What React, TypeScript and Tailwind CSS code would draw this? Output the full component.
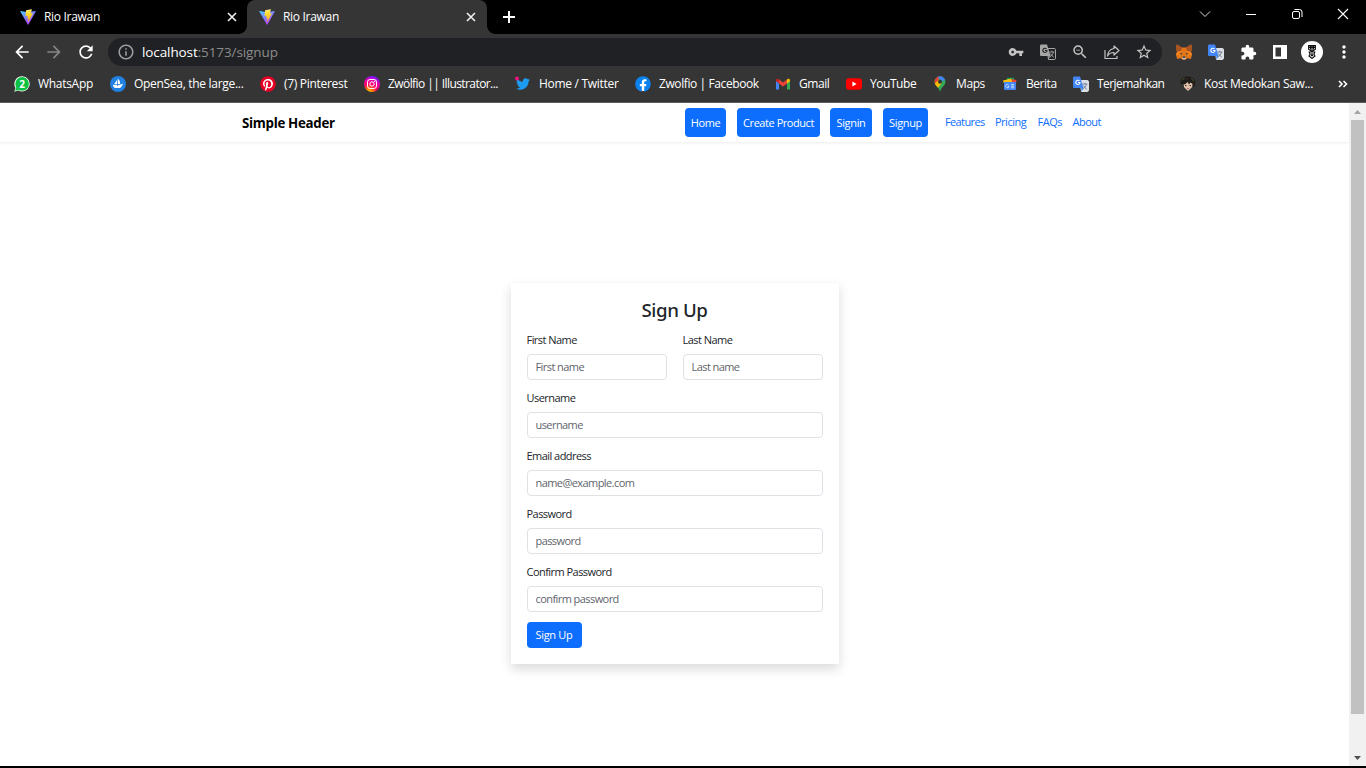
import React from "react";
import { MdArrowBack, MdArrowForward, MdRefresh, MdInfoOutline, MdVpnKey, MdZoomOut, MdStarBorder, MdExtension, MdMoreVert } from "react-icons/md";
import { FaPinterest, FaTwitter, FaFacebook } from "react-icons/fa";

function ViteLogo() {
  return (
    <svg width="16" height="16" viewBox="0 0 32 32" className="shrink-0">
      <defs>
        <linearGradient id="va" x1="0" y1="0" x2="0.6" y2="1">
          <stop offset="0" stopColor="#41d1ff" />
          <stop offset="1" stopColor="#bd34fe" />
        </linearGradient>
        <linearGradient id="vb" x1="0.4" y1="0" x2="0.5" y2="1">
          <stop offset="0" stopColor="#ffea83" />
          <stop offset="0.3" stopColor="#ffdd35" />
          <stop offset="1" stopColor="#ffa800" />
        </linearGradient>
      </defs>
      <path d="M31.5 5.2 17 31c-.3.6-1.2.6-1.5 0L.6 5.200c-.4-.7.2-1.500 1-1.300L16 6.400l14.500-2.500c.8-.2 1.400.6 1 1.300Z" fill="url(#va)" />
      <path d="m23 .5-10.600 2.100a.5.500 0 0 0-.4.400l-.7 11c0 .3.200.5.500.4l3-.7c.3 0 .5.200.5.500l-.9 4.300c0 .3.200.5.500.4l1.800-.5c.3-.1.600.1.500.4l-1.400 6.800c-.1.400.5.700.7.300L25.800 9c.2-.300-.1-.7-.4-.600l-3.100.6a.4.400 0 0 1-.5-.5L23.800 1c.1-.3-.4-.6-.8-.5Z" fill="url(#vb)" />
    </svg>
  );
}

function CloseMark() {
  return (
    <svg width="10" height="10" viewBox="0 0 10 10" className="shrink-0" stroke="#f1f1f1" strokeWidth="1.6">
      <path d="M1 1l8 8M9 1l-8 8" />
    </svg>
  );
}

function WhatsAppIcon() {
  return (
    <svg width="16" height="16" viewBox="0 0 16 16">
      <path d="M8.200.3a7.600 7.600 0 1 1-3.700 14.300L.3 15.700l1.100-4A7.600 7.600 0 0 1 8.200.3Z" fill="#fff" />
      <circle cx="8.100" cy="7.900" r="6.800" fill="#0bc143" />
      <path d="m1.200 14.800.9-3.800 2.800 3Z" fill="#0bc143" />
      <text x="8" y="11.500" textAnchor="middle" fontSize="10" fontWeight="700" fill="#fff" fontFamily="Open Sans, sans-serif">2</text>
    </svg>
  );
}

function OpenSeaIcon() {
  return (
    <svg width="16" height="16" viewBox="0 0 16 16">
      <circle cx="8" cy="8" r="8" fill="#2081e2" />
      <path d="M7.700 2.800c1.800 1.200 2.800 3 2.300 5.200H7.700ZM7 4v4H4.300ZM3 8.800h3.900v1h1.300v-1h1.600l3-1v1c-.9.500-1 1.200-1.500 2-.5.900-1 1.200-2 1.200H5.600C4 12 3 10.700 3 8.800Z" fill="#fff" />
    </svg>
  );
}

function InstagramIcon() {
  return (
    <svg width="16" height="16" viewBox="0 0 16 16" fill="none">
      <defs>
        <radialGradient id="ig" cx="0.3" cy="1.05" r="1.050">
          <stop offset="0" stopColor="#ffd600" />
          <stop offset="0.25" stopColor="#ff7a00" />
          <stop offset="0.5" stopColor="#ff0069" />
          <stop offset="0.78" stopColor="#e600a8" />
          <stop offset="1" stopColor="#7a14ff" />
        </radialGradient>
      </defs>
      <circle cx="8" cy="8" r="8" fill="url(#ig)" />
      <rect x="3.500" y="3.500" width="9" height="9" rx="2.600" stroke="#fff" strokeWidth="1" />
      <circle cx="8" cy="8" r="2.200" stroke="#fff" strokeWidth="1" />
      <circle cx="10.600" cy="5.400" r=".6" fill="#fff" />
    </svg>
  );
}

function TwitterIcon() {
  return (
    <svg width="16" height="16" viewBox="0 0 16 16">
      <svg x="1" y="1" width="14" height="14"><FaTwitter size={14} color="#1d9bf0" /></svg>
      <circle cx="2" cy="2.600" r="2" fill="#f4127f" />
    </svg>
  );
}

function FacebookIcon() {
  return (
    <svg width="16" height="16" viewBox="0 0 16 16">
      <circle cx="8" cy="8" r="7" fill="#fff" />
      <FaFacebook size={16} color="#0c82ee" />
    </svg>
  );
}

function PinterestIcon() {
  return (
    <svg width="16" height="16" viewBox="0 0 16 16">
      <circle cx="8" cy="8" r="7" fill="#fff" />
      <FaPinterest size={16} color="#e60023" />
    </svg>
  );
}

function GmailIcon() {
  return (
    <svg width="16" height="16" viewBox="0 0 16 16">
      <path d="M1 4v9.500h3V7Z" fill="#4285f4" />
      <path d="M12 7v6.500h3V4Z" fill="#34a853" />
      <path d="M4 3.500 8 6.500l4-3V7.500L8 10.500l-4-3Z" fill="#ea4335" />
      <path d="M1 4.300C1 2.700 2.700 2.200 4 3.300V7.500L1 5.300Z" fill="#c5221f" />
      <path d="M15 4.300C15 2.700 13.300 2.200 12 3.300V7.500l3-2.200Z" fill="#fbbc04" />
    </svg>
  );
}

function YouTubeIcon() {
  return (
    <svg width="16" height="16" viewBox="0 0 16 16">
      <rect x="0" y="2.300" width="16" height="11.400" rx="3" fill="#f00" />
      <path d="M6.400 5.600v4.800L10.600 8Z" fill="#fff" />
    </svg>
  );
}

function MapsIcon() {
  return (
    <svg width="16" height="16" viewBox="0 0 16 16">
      <defs>
        <clipPath id="pin"><path d="M8 .3a5.500 5.500 0 0 1 5.500 5.500C13.500 9.500 9.500 10.500 8 15.700 6.500 10.500 2.500 9.500 2.500 5.800A5.500 5.500 0 0 1 8 .3Z" /></clipPath>
      </defs>
      <g clipPath="url(#pin)">
        <rect width="16" height="16" fill="#34a853" />
        <path d="M0 0h8L6 5 2 9Z" fill="#ea4335" />
        <path d="M5 0h11v4L9 5Z" fill="#4285f4" />
        <path d="M2 8.500 6.500 4l3 3.500L5 13Z" fill="#fbbc04" />
      </g>
      <circle cx="8" cy="5.800" r="2" fill="#353535" />
    </svg>
  );
}

function NewsIcon() {
  return (
    <svg width="16" height="16" viewBox="0 0 16 16">
      <path d="M5 1.800h7v6H5Z" fill="#0f9d58" />
      <path d="m9 3 5.500 1-1 6H8Z" fill="#ea4335" />
      <path d="M1 4.500 9 2.500l2 6-8 2Z" fill="#ffc107" />
      <rect x="2" y="6" width="12" height="8" rx="1" fill="#4285f4" />
      <path d="M6.700 9.100A1.700 1.700 0 1 0 7 10.400H5.700M9 8.600h3.200M9 10.200h3.200M9 11.800h3.200" stroke="#e3edfd" strokeWidth=".8" fill="none" />
    </svg>
  );
}

function TranslateIcon({ mono = false }: { mono?: boolean }) {
  const back = mono ? "#202124" : "#dce0e6";
  const front = mono ? "#a6a6a6" : "#4285f4";
  const glyph = mono ? "#a6a6a6" : "#68778e";
  return (
    <svg width="16" height="16" viewBox="0 0 16 16" fill="none">
      <path d="M7 4.500h7.300c.7 0 1.200.5 1.200 1.200v8.600c0 .7-.5 1.200-1.200 1.200H8.500Z" fill={back} stroke={mono ? front : back} />
      <path d="M1.300.5H7l3.500 11.500H1.300c-.7 0-1.300-.6-1.300-1.300V1.800C0 1.100.6.500 1.300.5Z" fill={front} />
      <path d="m8.300 12.200 2.200.1-2 3Z" fill={mono ? front : "#1a73e8"} />
      <path d="M9.400 8h5M12 6.800V8M13.500 8c-.5 2.300-1.800 3.800-3.500 4.700M10.500 9.500c.7 1.500 1.800 2.800 3.300 3.700" stroke={glyph} strokeWidth=".9" />
      <path d="M6.500 5A2.100 2.100 0 1 0 7 6.500H5" stroke={mono ? "#202124" : "#fff"} strokeWidth="1.100" />
    </svg>
  );
}

function PortraitIcon() {
  return (
    <svg width="16" height="16" viewBox="0 0 16 16">
      <path d="M3 6 8 3.500l5 2.500-.8 5L8 15 3.800 11Z" fill="#e3c3ad" />
      <path d="M.5 7C0 3 3.500.5 7 .5c5 0 8.500 2.500 8.300 6.500-.1 2-.8 3.500-2.300 4.100L12.500 8 10.500 6.500 9 8.500 7.500 6 5 8.500 3.500 8v3.500C1.500 10.500.7 8.700.5 7Z" fill="#1f1d19" />
      <path d="M2 4.500 4.500 2M11.500 2.500l2.300 2.800M1.500 8.500l1 1.500" stroke="#4b6a34" strokeWidth=".9" />
      <path d="M6 2.500 7.500 4M12.500 6.500l1 2" stroke="#6b2d25" strokeWidth=".8" />
      <path d="M5 9.600h1.500M9.500 9.600H11" stroke="#302722" />
      <path d="M7 12.700h2" stroke="#a3665c" />
    </svg>
  );
}

function FoxIcon() {
  return (
    <svg width="16" height="16" viewBox="0 0 16 16">
      <path d="M.8.500 6 3.500h4L15.200.5 16 4l-1 4 1 3-1.200 4-3.300-.8L9.500 15.600h-3l-2-1.400-3.300.8L0 11l1-3L0 4Z" fill="#e2761b" />
      <path d="M.8.500 6 3.500 5 7 1 8 0 4ZM15.200.5 10 3.500 11 7l4 1 1-4Z" fill="#a85420" />
      <path d="M1 8 5 7l-.5 3.500L0 11ZM15 8l-4-1 .5 3.500L16 11Z" fill="#f6851b" />
      <path d="m3.600 9 2.600.3-.6 1.500ZM12.400 9l-2.600.3.600 1.500Z" fill="#243447" />
      <path d="M6.400 13h3.200l.4 1.600-1 .8H7l-1-.8Z" fill="#d5bfb2" />
      <path d="M6.500 12.500h3v1.300h-3Z" fill="#233447" />
    </svg>
  );
}

const bookmarks = [
  { icon: <WhatsAppIcon />, label: "WhatsApp", box: "w-[96px]", track: "tracking-[-0.3px]" },
  { icon: <OpenSeaIcon />, label: "OpenSea, the large...", box: "w-[150px]", track: "tracking-[-0.3px]" },
  { icon: <PinterestIcon />, label: "(7) Pinterest", box: "w-[104px]", track: "tracking-[-0.3px]" },
  { icon: <InstagramIcon />, label: "Zwölfio || Illustrator...", box: "w-[151px]", track: "tracking-[-0.58px]" },
  { icon: <TwitterIcon />, label: "Home / Twitter", box: "w-[120px]", track: "tracking-[-0.3px]" },
  { icon: <FacebookIcon />, label: "Zwolfio | Facebook", box: "w-[140px]", track: "tracking-[-0.4px]" },
  { icon: <GmailIcon />, label: "Gmail", box: "w-[71px]", track: "tracking-[-0.45px]" },
  { icon: <YouTubeIcon />, label: "YouTube", box: "w-[86px]", track: "tracking-[-0.45px]" },
  { icon: <MapsIcon />, label: "Maps", box: "w-[70px]", track: "tracking-[-0.4px]" },
  { icon: <NewsIcon />, label: "Berita", box: "w-[71px]", track: "tracking-[-0.45px]" },
  { icon: <TranslateIcon />, label: "Terjemahkan", box: "w-[107px]", track: "tracking-[-0.56px]" },
  { icon: <PortraitIcon />, label: "Kost Medokan Saw...", box: "w-[157px]", track: "tracking-[-0.33px]" },
];

function TabStrip() {
  return (
    <div className="flex h-[34px] items-center bg-black text-white">
      <div className="flex h-full w-[247px] items-center pl-5 pr-[10px]">
        <ViteLogo />
        <span className="ml-2 flex-1 tracking-[-0.3px]">Rio Irawan</span>
        <CloseMark />
      </div>
      <div className="relative flex h-full w-[240px] items-center rounded-t-lg bg-[#353535] pl-3 pr-[11px]">
        <span className="absolute -left-2 bottom-0 h-2 w-2 bg-[radial-gradient(circle_at_0_0,#000_7.500px,#353535_8px)]" />
        <span className="absolute -right-2 bottom-0 h-2 w-2 bg-[radial-gradient(circle_at_100%_0,#000_7.500px,#353535_8px)]" />
        <ViteLogo />
        <span className="ml-2 flex-1 tracking-[-0.3px]">Rio Irawan</span>
        <CloseMark />
      </div>
      <svg width="12" height="12" viewBox="0 0 12 12" className="ml-4" stroke="#fff" strokeWidth="2"><path d="M6 0v12M0 6h12" /></svg>
      <div className="ml-auto mr-[17px] mb-[6px] flex items-center gap-[34px]">
        <svg width="12" height="12" viewBox="0 0 12 12" fill="none" stroke="#ddd" strokeWidth="1"><path d="m1 3.500 5 5 5-5" /></svg>
        <svg width="12" height="12" viewBox="0 0 12 12" stroke="#fff"><path d="M1 6.500h10" /></svg>
        <svg width="12" height="12" viewBox="0 0 12 12" fill="none" stroke="#fff" strokeWidth="1"><rect x="1.500" y="3.500" width="7" height="7" rx="1.500" /><path d="M3.500 1.500h5a2.500 2.500 0 0 1 2.500 2.500v5" /></svg>
        <svg width="12" height="12" viewBox="0 0 12 12" stroke="#fff" strokeWidth="1.100"><path d="m1 1 10 10M11 1 1 11" /></svg>
      </div>
    </div>
  );
}

function Toolbar() {
  return (
    <div className="flex h-9 items-center bg-[#353535] pl-[12px] text-white">
      <MdArrowBack size={20} className="shrink-0" />
      <MdArrowForward size={20} color="#858585" className="ml-3 shrink-0" />
      <MdRefresh size={20} className="ml-3 shrink-0" />
      <div className="ml-3 flex h-7 w-[1054px] shrink-0 items-center rounded-full bg-[#202124] pl-[9px] pr-[10px] text-[#9aa0a6]">
        <MdInfoOutline size={18} />
        <span className="ml-[7px] flex-1 text-[13.5px] tracking-[-0.1px] text-[#8c8c8c]"><span className="text-white">localhost</span>:5173/signup</span>
        <div className="flex items-center gap-4 text-[#c4c4c4]">
          <MdVpnKey size={16} />
          <TranslateIcon mono />
          <MdZoomOut size={18} className="-mx-px" />
          <svg width="16" height="16" viewBox="0 0 16 16" fill="none" stroke="currentColor" strokeWidth="1.200"><path d="M1 6v8.500h12V12M10 2l5 4.500L10 11V8.500C7 8.500 5 9.500 3.500 12c.5-4 3-7 6.500-7.500Z" strokeLinejoin="round" /></svg>
          <MdStarBorder size={18} className="-mx-px" />
        </div>
      </div>
      <div className="ml-[14px] flex shrink-0 items-center gap-4">
        <FoxIcon />
        <TranslateIcon />
        <MdExtension size={17} className="-mr-px" />
        <svg width="16" height="16" viewBox="0 0 16 16"><path d="M1 1h14v14H1Z" fill="#fff" /><path d="M3.500 3.500h5.500v9H3.500Z" fill="#353535" /></svg>
      </div>
      <div className="ml-[13px] flex h-[22px] w-[22px] shrink-0 items-center justify-center rounded-full bg-white">
        <svg width="8" height="14" viewBox="0 0 8 14" fill="none" stroke="#111" strokeWidth="1.100"><path d="M.6.600h6.800v3.500L4 6.500.600 4.100ZM.6 2.400h6.800M2.500.6v4M4 .6v5M5.500.6v4M1.200 7h5.600L6 9l1 2-3 2.400L1 11l1-2Z" /><circle cx="4" cy="9.700" r="1" /></svg>
      </div>
      <MdMoreVert size={20} className="ml-[11px] shrink-0" />
    </div>
  );
}

const navButton = "flex h-[29px] items-center justify-center rounded-[4px] bg-[#0d6efd] pt-[2px] text-[11px] text-white";

function SiteHeader() {
  return (
    <header className="flex h-[39px] shrink-0 items-center bg-white pl-[242px] shadow-[0_1px_3px_rgba(0,0,0,0.08)]">
      <span className="w-[443px] pt-[3px] text-[13.300px] font-bold tracking-[-0.3px] text-black">Simple Header</span>
      <nav className="flex items-center">
        <a className={`${navButton} w-[41px] tracking-[-0.45px]`}>Home</a>
        <a className={`${navButton} ml-[11px] w-[83px] tracking-[-0.45px]`}>Create Product</a>
        <a className={`${navButton} ml-[10px] w-[42px] tracking-[-0.35px]`}>Signin</a>
        <a className={`${navButton} ml-[11px] w-[45px] tracking-[-0.35px]`}>Signup</a>
        <div className="ml-[17px] flex text-[11px] tracking-[-0.5px] text-[#0d6efd]">
          <a className="w-[50px] tracking-[-0.62px]">Features</a>
          <a className="w-[42.500px]">Pricing</a>
          <a className="w-[35px]">FAQs</a>
          <a>About</a>
        </div>
      </nav>
    </header>
  );
}

function Field({ label, placeholder, type = "text" }: { label: string; placeholder: string; type?: string }) {
  return (
    <label className="block flex-1 text-[11px] leading-4 tracking-[-0.54px] text-[#212529]">
      <span className="mb-[6px] block">{label}</span>
      <input
        type={type}
        placeholder={placeholder}
        className="block h-[26px] w-full min-w-0 rounded-[4px] border border-[#dee2e6] bg-white px-2 pb-[2px] text-[11px] tracking-[-0.57px] placeholder:text-[#5f656b]"
      />
    </label>
  );
}

function SignUpCard() {
  return (
    <form className="mt-[141px] h-[381px] w-[328px] bg-white px-4 pt-[15px] shadow-[0_5px_11px_rgba(0,0,0,0.15)]">
      <h1 className="mb-[11px] text-center font-['Noto_Sans','Open_Sans',sans-serif] text-[18.700px] font-medium leading-[23px] tracking-[-0.4px] text-[#212529]">Sign Up</h1>
      <div className="flex flex-col gap-[10px]">
        <div className="flex gap-4">
          <Field label="First Name" placeholder="First name" />
          <Field label="Last Name" placeholder="Last name" />
        </div>
        <Field label="Username" placeholder="username" />
        <Field label="Email address" placeholder="name@example.com" />
        <Field label="Password" placeholder="password" type="password" />
        <Field label="Confirm Password" placeholder="confirm password" type="password" />
        <button type="button" className="h-[26px] w-[55px] rounded-[4px] bg-[#0d6efd] text-[11px] tracking-[-0.3px] text-white">Sign Up</button>
      </div>
    </form>
  );
}

export default function App() {
  return (
    <div className="flex h-[768px] w-[1366px] flex-col overflow-hidden bg-black font-['Open_Sans',sans-serif] text-[12px]">
      <TabStrip />
      <Toolbar />
      <div className="flex h-8 items-center bg-[#353535] pb-1 pl-[14px] text-white">
        {bookmarks.map((b) => (
          <div key={b.label} className={`flex shrink-0 items-center gap-2 whitespace-nowrap ${b.box} ${b.track}`}>
            <span className="shrink-0">{b.icon}</span>
            <span>{b.label}</span>
          </div>
        ))}
        <svg width="10" height="8" viewBox="0 0 10 8" className="ml-px shrink-0" fill="none" stroke="#fff" strokeWidth="1.600"><path d="m1 1 3 3-3 3M5.500 1l3 3-3 3" /></svg>
      </div>
      <div className="h-px bg-[#5c5c5c]" />
      <div className="flex h-[663px]">
        <main className="flex flex-1 flex-col items-center bg-white">
          <div className="w-full"><SiteHeader /></div>
          <SignUpCard />
        </main>
        <div className="flex w-[17px] flex-col items-center bg-[#f1f1f1]">
          <div className="flex h-[17px] items-center"><svg width="7" height="4" viewBox="0 0 7 4"><path d="M3.500 0 7 4H0Z" fill="#a3a3a3" /></svg></div>
          <div className="h-[594px] w-[13px] bg-[#c1c1c1]" />
          <div className="mt-auto flex h-[17px] items-center"><svg width="7" height="4" viewBox="0 0 7 4"><path d="M0 0h7L3.500 4Z" fill="#505050" /></svg></div>
        </div>
      </div>
    </div>
  );
}
